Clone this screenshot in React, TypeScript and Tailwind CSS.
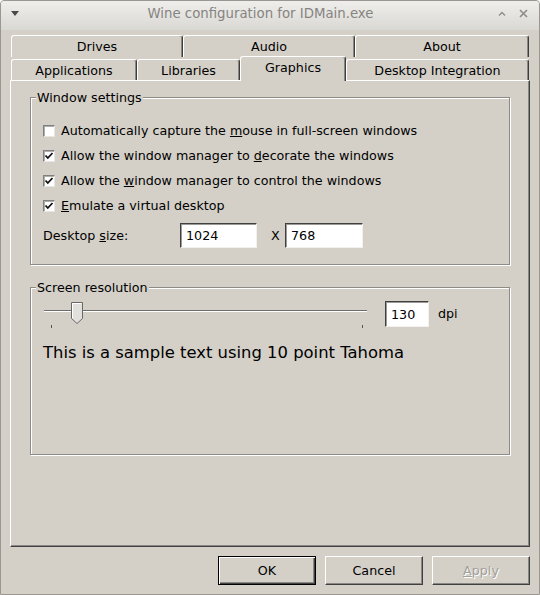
import type React from 'react';

const CheckBox: React.FC<{ checked?: boolean }> = ({ checked }) => (
  <span className="flex h-[12px] w-[12px] shrink-0 items-center justify-center border border-t-[#808080] border-l-[#808080] border-r-[#e8e6e2] border-b-[#e8e6e2] bg-white shadow-[inset_1px_1px_0_#b0aea9]">
    {checked && (
      <svg width="10" height="10" viewBox="0 0 10 10">
        <polyline points="1.5,4.5 3.8,7 8.5,2" fill="none" stroke="#111" strokeWidth="1.8" />
      </svg>
    )}
  </span>
);

const Option: React.FC<{ checked?: boolean; children: React.ReactNode }> = ({ checked, children }) => (
  <div className="flex h-[25px] items-center gap-[6px]">
    <CheckBox checked={checked} />
    <span>{children}</span>
  </div>
);

const Field: React.FC<{ value: string; className: string }> = ({ value, className }) => (
  <div
    className={`flex items-center border border-t-[#404040] border-l-[#404040] border-r-[#f2f1ee] border-b-[#f2f1ee] bg-white pl-[5px] shadow-[inset_1px_1px_0_#9c9a96] ${className}`}
  >
    {value}
  </div>
);

const TabItem: React.FC<{ label: string; className: string }> = ({ label, className }) => (
  <div
    className={`flex items-center justify-center rounded-t-[3px] border-x border-t border-t-white border-l-white border-r-[#3c3c3c] shadow-[inset_-1px_0_0_#8a8884] ${className}`}
  >
    {label}
  </div>
);

const Button: React.FC<{ children: React.ReactNode; primary?: boolean; disabled?: boolean }> = ({
  children,
  primary,
  disabled,
}) => (
  <div
    className={`flex h-[29px] w-[98px] items-center justify-center border ${
      primary
        ? 'border-black shadow-[inset_1px_1px_0_#fff,inset_-1px_-1px_0_#404040,inset_-2px_-2px_0_#8a8884]'
        : 'border-t-white border-l-white border-r-[#404040] border-b-[#404040] shadow-[inset_-1px_-1px_0_#8a8884]'
    } ${disabled ? 'text-[#a3a09a] [text-shadow:1px_1px_0_#fff]' : ''}`}
  >
    {children}
  </div>
);

export default function App() {
  return (
    <div className="flex h-[595px] w-[540px] flex-col overflow-hidden rounded-t-[4px] border border-[#9a9792] bg-[#d4d0c8] font-['DejaVu_Sans',sans-serif] text-[12.7px] leading-[15px] text-black">
      {/* title bar */}
      <div className="flex h-[29px] items-center bg-linear-to-b from-[#efeeec] to-[#dad8d3] pb-[5px] text-[13.3px] text-[#858480]">
        <div className="flex w-[50px] pl-[10px]">
          <svg width="8" height="5" viewBox="0 0 8 5">
            <polygon points="0,0 8,0 4,5" fill="#4a4a4a" />
          </svg>
        </div>
        <div className="flex-1 text-center">Wine configuration for IDMain.exe</div>
        <div className="flex w-[69px] items-center justify-end gap-[13px] pr-[11px]">
          <svg width="8" height="5" viewBox="0 0 8 5">
            <polyline points="1,4.5 4,1.5 7,4.5" fill="none" stroke="#8c8c8c" strokeWidth="1.4" />
          </svg>
          <svg width="9" height="9" viewBox="0 0 9 9">
            <path d="M1 1 L8 8 M8 1 L1 8" stroke="#8c8c8c" strokeWidth="1.6" />
          </svg>
        </div>
      </div>

      <div className="flex flex-col px-[9px]">
        {/* tabs */}
        <div className="ml-[1px] mt-[5px] flex flex-col">
          <div className="flex h-[22px]">
            <TabItem label="Drives" className="w-[172px] pb-[1px]" />
            <TabItem label="Audio" className="w-[172px] pb-[1px]" />
            <TabItem label="About" className="w-[174px] pb-[1px]" />
          </div>
          <div className="flex h-[23px] items-start">
            <TabItem label="Applications" className="mt-[2px] h-[21px] w-[126px]" />
            <TabItem label="Libraries" className="mt-[2px] h-[21px] w-[103px]" />
            <TabItem label="Graphics" className="relative z-10 -mt-[1px] h-[25px] w-[106px] bg-[#d4d0c8] pb-[3px]" />
            <TabItem label="Desktop Integration" className="mt-[2px] h-[21px] w-[183px]" />
          </div>
        </div>

        {/* tab page */}
        <div className="flex h-[467px] flex-col border border-t-white border-l-white border-r-[#404040] border-b-[#404040] px-[19px] shadow-[inset_-1px_-1px_0_#8a8884]">
          <fieldset className="mt-[9px] h-[175px] w-[480px] border border-[#8d8b86] pl-[12px] shadow-[inset_1px_1px_0_#fff,1px_1px_0_#fff]">
            <legend className="-ml-[7px] bg-[#d4d0c8] px-[1px]">Window settings</legend>
            <div className="mt-[13px] flex flex-col">
              <Option>
                Automatically capture the <u>m</u>ouse in full-screen windows
              </Option>
              <Option checked>
                Allow the window manager to <u>d</u>ecorate the windows
              </Option>
              <Option checked>
                Allow the <u>w</u>indow manager to control the windows
              </Option>
              <Option checked>
                <u>E</u>mulate a virtual desktop
              </Option>
              <div className="mt-[5px] flex h-[25px] items-center">
                <span className="w-[137px]">
                  Desktop <u>s</u>ize:
                </span>
                <Field value="1024" className="h-[25px] w-[77px]" />
                <span className="w-[28px] pl-[14px]">X</span>
                <Field value="768" className="h-[25px] w-[78px]" />
              </div>
            </div>
          </fieldset>

          <fieldset className="mt-[15px] h-[175px] w-[480px] border border-[#8d8b86] pl-[12px] shadow-[inset_1px_1px_0_#fff,1px_1px_0_#fff]">
            <legend className="-ml-[7px] bg-[#d4d0c8] px-[1px]">Screen resolution</legend>
            <div className="mt-[6px] flex items-start">
              <div className="relative ml-[1px] h-[28px] w-[323px]">
                <div className="absolute inset-x-0 top-[9px] h-[2px] border-y border-t-[#6f6d69] border-b-white" />
                <svg className="absolute left-[27px] top-[1px]" width="12" height="22" viewBox="0 0 12 22">
                  <polygon points="0.5,0.5 11.5,0.5 11.5,16.5 6,21.5 0.5,16.5" fill="#e2e0dc" stroke="#6a6864" />
                  <polyline points="1.5,16 1.5,1.5 10.5,1.5" fill="none" stroke="#fff" />
                </svg>
                <div className="absolute left-[7px] top-[24px] h-[3px] w-px bg-[#555]" />
                <div className="absolute left-[318px] top-[24px] h-[3px] w-px bg-[#555]" />
              </div>
              <Field value="130" className="ml-[18px] h-[26px] w-[44px]" />
              <span className="ml-[9px] mt-[5px]">dpi</span>
            </div>
            <div className="mt-[14px] text-[16.4px] leading-[19px]">This is a sample text using 10 point Tahoma</div>
          </fieldset>
        </div>

        {/* buttons */}
        <div className="mt-[9px] flex justify-end gap-[9px]">
          <Button primary>OK</Button>
          <Button>Cancel</Button>
          <Button disabled>
            <u>A</u>pply
          </Button>
        </div>
      </div>
    </div>
  );
}
